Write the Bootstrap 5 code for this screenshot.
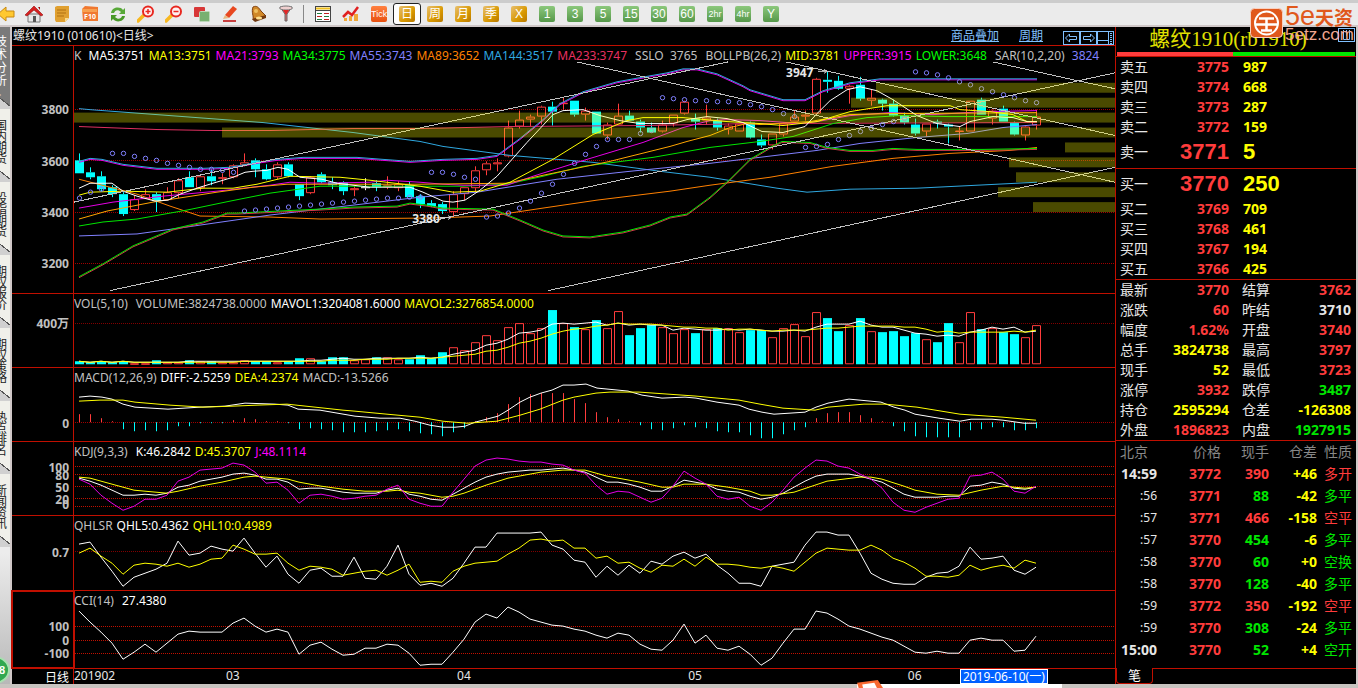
<!DOCTYPE html>
<html lang="zh-CN">
<head>
<meta charset="utf-8">
<meta name="viewport" content="width=device-width, initial-scale=1">
<title>螺纹1910 日线</title>
<link rel="stylesheet" href="https://cdn.jsdelivr.net/npm/bootstrap@5.3.0/dist/css/bootstrap.min.css">
<style>
:root{--line:#c00f00;--up:#ff3c3c;--dn:#00e600;--yel:#ffff00;--pale:#e6e6e6;--sky:#80c0ff}
body{font-family:"Noto Sans","Noto Sans CJK SC",sans-serif;font-size:12px;line-height:15px;background:#000;color:var(--pale);overflow:hidden}
.toolbar{border-top:3px solid #ccc;border-bottom:2px solid #d0c8c8;background:#ebebeb;height:27px;flex:none}
.tool{width:28px;height:22px;padding:0;border:1px solid transparent;background:none;flex:none;display:flex;align-items:center;justify-content:center;border-radius:3px}
.tool svg{width:18px;height:18px;flex:none}
.tool:first-child{margin-left:-8px}
.tool[aria-pressed=true]{background:#fff;border-color:#222}
.sep{width:9px;flex:none}
.sep::before{content:"";display:block;width:1px;height:18px;margin:2px 0 0 3px;background:#888}
.chip{width:16px;height:16px;border-radius:2px;font:12px/16px "Liberation Sans","Noto Sans CJK SC",sans-serif;color:#fff;text-align:center;white-space:nowrap}
.gold{background:linear-gradient(135deg,#e8c070,#d89800 60%,#b87800)}
.leaf{background:linear-gradient(#8cc87c,#56984a)}
.chip.tight{font-size:9px}
.tick{background:linear-gradient(#ff8040,#e85010)}
.side{width:12px;flex:none;background:linear-gradient(#ececec 80%,#b8b8b8);border-right:2px solid #d0c8c8;overflow:hidden;position:relative}
.side button{display:flex;align-items:flex-start;width:10px;height:73px;flex:none;padding:11px 0 0;border:0;background:linear-gradient(39deg,#d0d0d0 8px,#555 8px,#555 9px,#f0f0ea 9px);color:#222;overflow:hidden;text-align:left}
.side button span{display:block;flex:none;width:13px;margin-left:-5px;font-size:12px;line-height:11px;word-break:break-all}
.side .on{background:linear-gradient(39deg,#d0d0d0 8px,#555 8px,#555 9px,#7a7a7a 9px);color:#fff;height:82px;padding-top:8px}
.side .on span{line-height:13px}
.side .orb{position:absolute;left:-22px;bottom:0;width:32px;height:28px;border-radius:50%;background:#30a850;border:2px solid #a8e0b0;color:#fff;font:bold 11px/24px "Liberation Sans",sans-serif;text-align:right;padding-right:3px}
.titlebar{height:19px;flex:none;border-bottom:1px solid var(--line);padding:0 1px}
.titlebar h1{font-size:12px;line-height:18px;margin:0;font-weight:400}
.titlebar a{color:var(--sky);line-height:18px}
.win{padding:0;border:1px solid var(--sky);background:#000;width:17px;height:14px;display:block}
.win svg{display:block;width:15px;height:12px}
.pane{display:flex;flex-basis:0;min-height:0;border-bottom:1px solid var(--line)}
.axis{width:62px;flex:none;border-right:1px solid var(--line);position:relative;font-weight:700;color:#c0c0c0}
.axis span{position:absolute;right:4px;transform:translateY(-50%)}
.plot{position:relative;flex:1;min-width:0}
.plot svg{position:absolute;inset:0;width:100%;height:100%}
.plot svg *{vector-effect:non-scaling-stroke}
.leg{position:relative;z-index:1;display:flex;column-gap:4px;white-space:nowrap;padding:2px 0 0;color:#c0c0c0;overflow:hidden}
.pk{position:absolute;font:bold 12px/12px "Noto Sans",sans-serif}
.hi{left:68.4%;top:8.4%}.lo{left:32.5%;top:67.6%}
.current .axis{outline:2px solid var(--line);outline-offset:-1px}
.cw{color:#fff}.cy{color:var(--yel)}.cm{color:#f0f}.cg{color:#00ff00}.cp{color:#8080ff}.co{color:#ff8000}.cb{color:#2fa8e0}.cr{color:#e83060}
.r{color:var(--up)}.g{color:var(--dn)}.y{color:var(--yel)}
.dates{height:15px;flex:none}
.dates .track{position:relative;flex:1}
.dates .track span{position:absolute;top:0;line-height:14px}
.dates .track .cur{background:#0060ff;border:1px solid #fff;color:#fff;height:15px;padding:0 2px;white-space:nowrap}
.quote{width:243px;flex:none;border-left:1px solid var(--line);border-right:2px solid #d0c8c8}
.name{height:24px;font:21px/25px "Liberation Serif","Noto Sans CJK SC",serif;color:#e0e000;text-align:center;margin:0;padding-right:16px;white-space:nowrap}
.balance{height:4px;margin:1px 1px 0}
.balance i:first-child{flex:116;background:var(--up)}
.balance i:last-child{flex:122;background:var(--dn)}
.quote table{width:100%;table-layout:fixed;border-collapse:collapse;border-top:1px solid var(--line)}
.quote td,.quote th{padding:0;height:20px;line-height:18px;font-size:14px;font-weight:700;text-align:right;white-space:nowrap}
.quote tbody th,.quote thead th{font-weight:400;text-align:left;padding-left:4px}
.depth td:last-child{text-align:left;padding-left:14px}
.big td{font:bold 22px/28px "Liberation Sans",sans-serif!important;height:31px}
.stats th+td+th{padding-left:13px!important}
.stats td:last-child{padding-right:5px}
.deals td,.deals th{height:22px!important;line-height:20px!important}
.deals thead th{color:#888;text-align:right!important;padding-left:0!important;height:23px!important}
.deals th:first-child{text-align:left!important;padding-left:4px!important}
.deals td:first-child{padding-left:5px;text-align:left}
.deals .sec{font-size:12px;font-weight:400;padding:0 8px 0 0!important;text-align:right!important}
.deals td:last-child,.deals th:last-child{font-weight:400;padding-right:4px}
.foot{border-top:1px solid var(--line);height:16px;margin-top:7px}
.foot button{background:#000;color:#fff;border:1px solid var(--line);border-top:0;border-radius:0 0 4px 4px;width:37px;height:16px;margin-top:-1px;padding:0;font-size:13px;line-height:15px;display:block}
.base{height:4px;background:#c8c4c0;flex:none;position:relative}
.base .pop{position:absolute;left:63.1%;width:205px;height:4px;background:#fff;bottom:0}
.base svg{position:absolute;left:0;bottom:0;width:26px;height:8px}
.brand-mark{position:absolute;right:2px;top:7px;width:106px;z-index:3;color:#e0581c;font:bold 19px/19px "Liberation Sans","Noto Sans CJK SC",sans-serif;gap:2px;white-space:nowrap}
.brand-mark svg{width:33px;height:31px;flex:none}
.brand-mark small{display:block;font:17px/13px "Liberation Sans",sans-serif;color:#f0a890}
.brand-mark b{font-size:27px;font-weight:400}
.panelbtn{position:absolute;right:3px;top:28px;z-index:2}
</style>
</head>
<body class="d-flex flex-column vh-100">
<header class="toolbar d-flex" id="tools"></header>

<div class="d-flex flex-grow-1" style="min-height:0">
  <nav class="side d-flex flex-column" aria-label="分类">
    <button class="on"><span>技术分析▸</span></button>
    <button><span>国内期货</span></button><button><span>股指期货</span></button><button><span>期权报价</span></button><button><span>期权策略</span></button><button><span>热点排名</span></button><button><span>新闻资讯</span></button>
    <div class="orb">8</div>
  </nav>

  <main class="d-flex flex-column flex-grow-1" style="min-width:0">
    <div class="titlebar d-flex align-items-start">
      <h1 class="me-auto">螺纹1910 (010610)&lt;日线&gt;</h1>
      <a href="#" class="me-3 ms-1">商品叠加</a><a href="#" class="me-3 ms-1">周期</a>
      <div class="d-flex ms-1">
        <button class="win mt-1" aria-label="左移"><svg viewBox="0 0 15 12" fill="none" stroke="#80c0ff"><path d="M1.5 6l4-4v2.500h7v3h-7V10z"/></svg></button>
        <button class="win mt-1" aria-label="右移"><svg viewBox="0 0 15 12" fill="none" stroke="#80c0ff"><path d="M13.500 6l-4-4v2.500h-7v3h7V10z"/></svg></button>
        <button class="win mt-1" aria-label="布局"><svg viewBox="0 0 15 12" fill="none" stroke="#80c0ff"><path d="M0 8.500h10M10.500 0v12"/><path d="M13 1v11" stroke-width="2" stroke-dasharray="1 1"/></svg></button>
      </div>
    </div>
    <div id="panes" class="d-flex flex-column flex-grow-1" style="min-height:0"></div>
    <div class="dates d-flex">
      <div class="axis fw-normal text-white"><span style="top:50%">日线</span></div>
      <div class="track" id="track"></div>
    </div>
  </main>

  <aside class="quote">
    <h2 class="name">螺纹1910(rb1910)</h2>
    <div class="balance d-flex"><i></i><i></i></div>
    <table class="depth"><colgroup><col style="width:49px"><col style="width:64px"><col></colgroup><tbody id="asks"></tbody></table>
    <table class="depth"><colgroup><col style="width:49px"><col style="width:64px"><col></colgroup><tbody id="bids"></tbody></table>
    <table class="stats"><colgroup><col style="width:42px"><col style="width:71px"><col style="width:46px"><col></colgroup><tbody id="stats"></tbody></table>
    <table class="deals"><colgroup><col style="width:49px"><col style="width:56px"><col style="width:48px"><col style="width:48px"><col></colgroup>
      <thead><tr><th>北京</th><th>价格</th><th>现手</th><th>仓差</th><th>性质</th></tr></thead><tbody id="deals"></tbody></table>
    <div class="foot"><button>笔</button></div>
  </aside>
</div>
<footer class="base"><div class="pop"><svg viewBox="0 0 30 9"><path d="M0 3L24 0l6 9H2z" fill="#f86830"/><path d="M6 5l14-2 3 6H7z" fill="#fff"/></svg></div></footer>

<div class="brand-mark d-flex">
  <svg viewBox="0 0 33 31"><rect x=".5" y="1.500" width="32" height="29" rx="4" fill="#e0581c" stroke="#f8d0c0"/><circle cx="16.500" cy="16" r="11.500" fill="none" stroke="#fff" stroke-width="2"/><path d="M9 11.500h15M16.500 11.500V24M6 17.500h21M11 23.500h11" stroke="#fff" stroke-width="2.500" fill="none"/></svg>
  <div><b>5e</b>天资<small>5etz.com</small></div>
</div>
<button class="win panelbtn" aria-label="面板"><svg viewBox="0 0 15 12" fill="none" stroke="#80c0ff"><path d="M4.500 1v9.500h6V1M7.500 1v6"/></svg></button>

<script>
// ---- toolbar ----
const icons = {
  '后退':'<path d="M1 9l8-7v4h8v6H9v4z" fill="#ffc830" stroke="#c88810"/>',
  '首页':'<path d="M3 9h12v8H3z" fill="#e8e8e8" stroke="#777"/><path d="M8 11h3v6H8z" fill="#555"/><path d="M0 10L9 1l9 9-2 1-7-6-7 6z" fill="#d82020" stroke="#901010" stroke-width=".6"/><path d="M13 2h2v3z" fill="#a01010"/>',
  '笔记':'<path d="M2 2l2-1h12v12l-4 4H3l-1-2z" fill="#e0a030"/><path d="M4 5h9M4 8h9M4 11h7" stroke="#b07010"/><path d="M12 17v-4h4z" fill="#f8dc90"/>',
  'F10':'<path d="M1 4l3-3 13 1v14H2z" fill="#f07830"/><path d="M1 4h15v3H1z" fill="#f8a050"/><text x="9" y="14" font-size="7" font-weight="bold" text-anchor="middle" fill="#fff">F10</text>',
  '刷新':'<path d="M2 8c1-6 9-7 12-3l2-2v6h-6l2-2C9 4 6 5 5 8z" fill="#58a838"/><path d="M16 11c-1 6-9 7-12 3l-2 2v-6h6l-2 2c3 3 6 2 7-1z" fill="#489828"/>',
  '放大':'<path d="M7 10l-6 6" stroke="#f8b820" stroke-width="3.500" stroke-linecap="round"/><circle cx="11" cy="6.500" r="5" fill="#fff0f0" stroke="#e82820" stroke-width="2"/><path d="M8.500 6.500h5M11 4v5" stroke="#e82820" stroke-width="1.500"/>',
  '缩小':'<path d="M7 10l-6 6" stroke="#f8b820" stroke-width="3.500" stroke-linecap="round"/><circle cx="11" cy="6.500" r="5" fill="#fff0f0" stroke="#e82820" stroke-width="2"/><path d="M8.500 6.500h5" stroke="#e82820" stroke-width="1.500"/>',
  '叠加':'<rect x="1" y="2" width="11" height="10" rx="1" fill="#d83838"/><rect x="6.500" y="6.500" width="10" height="10" rx="1" fill="#78b070" stroke="#bcd8b8"/>',
  '画线':'<path d="M4 10L12 1l4 3-8 9z" fill="#e84820"/><path d="M4 10l4 3-6 1z" fill="#e8b880"/><path d="M2 16h13" stroke="#c84040" stroke-width="2"/>',
  '预警':'<path d="M4 2c4-2 6 1 8 4l5 5-13 4C5 11 2 7 4 2z" fill="#d08828" stroke="#804010"/><path d="M3 14l14-4v3L6 17z" fill="#703810"/><ellipse cx="10" cy="13" rx="3" ry="1.500" fill="#ffe090"/><circle cx="7" cy="6" r="2" fill="#f0c060"/>',
  '筛选':'<path d="M3 2h12l-5 7v7H8V9z" fill="#d87070" stroke="#666"/><ellipse cx="9" cy="3" rx="6.500" ry="2" fill="#f0d0d0" stroke="#777"/><path d="M6 5h6l-3 5z" fill="#e02828"/>',
  '|':'',
  '报价':'<rect x="1.500" y="1.500" width="15" height="15" fill="#fff" stroke="#444"/><path d="M2 3.500h14" stroke="#f0c020" stroke-width="2"/><path d="M2 5.500h14" stroke="#444"/><path d="M3 8.500h5M3 14.500h5M10 11.500h5" stroke="#208040"/><path d="M10 8.500h5M3 11.500h5M10 14.500h5" stroke="#c02020"/>',
  '走势':'<path d="M2 16v-3h3v3zM7 16v-5h3v5zM12 16V9h4v7z" fill="#f0a838"/><path d="M1 12l5-5 4 3 6-8" stroke="#e02020" stroke-width="2.500" fill="none"/>'
};
const periods = ['日','周','月','季','X','1','3','5','15','30','60','2hr','4hr','Y'];
tools.innerHTML = Object.entries(icons).map(([k,v]) => k==='|' ? '<div class="sep"></div>' : `<button class="tool" aria-label="${k}"><svg viewBox="0 0 18 18">${v}</svg></button>`).join('')
  + '<button class="tool"><span class="chip tick tight">Tick</span></button>'
  + periods.map((p,i) => `<button class="tool" aria-pressed="${i===0}"><span class="chip ${i<5?'gold':'leaf'} ${p.length>2?'tight':''}">${p}</span></button>`).join('');

// ---- chart data: one bar every 11 units, first bar centred at 79 ----
const X = i => 79 + 11*i;
// kind, open/close top, bottom, high, low
const bars = `d161,174,154,174 d173,178,168,180 d177,190,172,192 d188,195,186,198 d195,215,193,217 u200,211,196,212 u195,200,190,200 d195,202,193,213 u193,201,188,201 u181,194,179,199 d178,188,172,188 u177,189,177,192 d177,182,170,186 u178,179,174,185 u166,178,165,179 u163,166,154,167 d161,170,159,178 d170,180,165,181 u165,178,163,180 d165,177,163,178 d185,197,185,201 u178,194,177,195 d175,183,173,184 d183,186,178,190 d183,192,182,196 u189,191,187,197 w188,189,179,191 d184,188,181,192 u186,188,177,190 u185,189,182,192 d186,198,182,198 d197,205,195,209 d204,207,201,208 d205,212,203,215 u195,213,192,217 u188,195,188,201 u171,189,167,193 u164,171,162,176 u163,165,159,172 u128,157,121,158 u120,127,111,129 u117,120,115,127 u107,117,106,125 d107,112,102,126 u103,104,98,110 d101,115,101,117 u111,115,108,121 d112,134,112,134 u125,136,123,140 u116,125,104,125 d116,121,111,121 d122,128,120,133 d128,133,123,133 u125,132,121,133 u115,124,115,127 u102,114,101,115 d119,122,114,130 u118,121,105,125 d121,128,119,131 u126,130,124,135 u124,132,124,132 d123,138,122,139 d140,146,135,148 u134,146,134,150 u124,135,123,137 u117,122,111,122 u115,117,111,121 u79,114,78,116 d80,82,72,93 d81,89,76,90 u86,89,85,104 d85,99,77,101 u98,101,90,106 d100,104,99,111 d104,116,100,117 d116,123,113,125 d125,134,119,136 u124,132,124,137 d122,124,120,129 d125,127,124,144 u131,132,127,141 u101,132,101,132 d100,115,98,115 u111,119,110,125 d109,122,106,122 d123,135,122,136 u127,136,126,141 u117,126,110,130`.split(' ').map(s=>[s[0],...s.slice(1).split(',').map(Number)]);
const sar = [199,193,190,154,154,157,159,161,164,166,168,170,170,171,173,212,211,210,209,208,207,206,205,204,203,202,201,200,199,199,198,198,173,173,175,178,180,218,217,214,209,202,194,185,175,164,155,147,140,140,140,134,131,98,99,100,101,101,102,102,103,105,107,110,114,117,148,147,145,140,136,132,129,125,122,119,72,73,75,78,82,85,89,92,95,98,101,103];
const curves = [
 ['#2fa8e0','79,109 90,110 170,116 263,123 353,133 420,142 443,147 510,156 593,163 660,172 710,178 777,189 807,193 850,190 917,189 1037,183'],
 ['#e03060','79,127 157,130 213,131 270,131 353,129 420,129 510,127 643,126 750,124 1037,123'],
 ['#ff8000','79,180 137,195 170,207 200,217 270,218 320,220 430,219 490,217 543,209 597,201 670,192 710,186 770,178 833,167 893,159 950,154 1010,151 1037,148'],
 ['#8080ff','79,237 137,235 187,228 270,216 337,208 420,198 477,193 557,180 630,172 710,164 817,151 860,144 917,138 967,134 1003,128 1037,125'],
 ['#00e600','79,227 103,223 137,220 187,211 230,202 270,194 320,187 410,187 463,187 507,185 543,177 583,167 653,158 710,148 760,142 793,137 833,124 867,118 900,116 950,117 1037,117'],
 ['#e600e6','79,209 113,203 163,197 217,192 270,186 290,183 320,184 370,183 387,181 420,183 443,185 463,186 507,186 533,177 587,160 643,143 683,128 710,121 727,120 760,121 800,124 817,122 850,116 890,113 933,115 983,112 1037,111'],
 ['#ffa500','79,220 107,212 153,203 217,193 253,188 287,185 420,185 507,184 543,176 610,162 670,147 687,142 710,136 730,128 747,124 760,125 810,122 850,115 890,114 1037,113'],
 ['#ffff00','79,196 90,193 123,192 167,193 203,189 233,189 257,185 290,177 340,178 370,181 420,187 453,193 480,192 510,183 553,160 593,135 627,121 643,118 683,118 727,122 760,124 783,126 817,122 850,112 887,106 950,106 960,110 990,112 1013,115 1027,122 1037,122'],
 ['#ffffff','79,189 90,184 112,184 123,192 137,197 155,202 168,201 180,195 200,188 213,184 233,178 245,173 253,172 267,171 278,168 288,170 300,178 322,180 337,184 353,186 370,188 410,188 423,193 443,202 453,203 465,201 480,191 497,177 527,143 553,115 563,111 583,110 600,116 620,121 640,124 673,124 687,120 707,117 727,119 743,123 762,132 783,133 805,127 817,114 830,101 847,90 860,87 877,91 893,100 917,116 937,124 960,127 970,122 993,117 1013,118 1027,122 1037,122']
];
const upper = '79,163 90,160 102,161 123,166 157,170 203,170 230,169 257,164 277,161 303,159 357,159 383,161 410,163 443,161 477,160 497,157 520,140 543,121 560,105 583,93 617,83 650,77 667,74 683,70 697,70 717,75 743,87 750,91 783,101 805,101 823,92 850,84 880,80 1037,80';
const lower = '79,278 103,265 133,247 173,230 203,223 227,214 237,214 320,210 353,208 397,207 410,204 427,206 443,209 493,210 520,221 543,231 563,237 590,238 623,233 650,226 670,218 687,215 710,198 730,180 750,160 770,148 782,142 810,143 827,148 850,151 873,151 893,149 917,150 983,150 1037,149';
const rays = ['74,203 728,62','110,292 1115,73','548,292 1115,168','577,62 1115,183','786,62 1115,136','993,62 1078,81 1115,89','1078,81 1115,73'];
const profile = [[876,83],[851,98],[74,113],[222,128],[1065,143],[1009,158],[1016,173],[998,188],[1033,203]];
const vol = [362,363,362,363,362,364,364,361,363,363,361,362,362,363,363,361,362,362,363,362,359,359,362,358,358,361,360,358,358,360,360,356,359,353,348,351,343,336,341,328,324,334,329,311,324,328,330,321,329,312,336,329,326,328,334,330,334,330,329,329,333,331,331,338,329,325,337,313,319,332,326,319,332,333,332,337,334,340,343,324,343,313,330,329,333,335,338,326];
const macd = [415,415,419,422,430,432,431,432,431,427,427,424,424,424,421,419,420,422,422,424,430,429,430,431,433,433,433,432,431,430,432,434,435,437,433,429,422,418,414,405,398,395,394,394,394,400,404,413,418,420,422,426,430,431,429,426,428,429,432,433,433,436,439,439,435,431,428,419,414,413,413,416,419,422,427,432,437,438,438,438,438,431,430,428,428,431,431,429];
const diff = '79,398 90,397 102,398 112,400 123,405 135,408 168,410 200,408 225,407 245,404 275,405 288,406 298,410 320,411 355,417 380,419 400,419 415,422 430,426 443,428 455,428 465,427 475,423 498,417 508,411 520,403 530,398 541,394 552,391 563,386 574,386 586,385 597,389 628,392 642,396 662,399 685,398 696,399 717,403 739,406 749,410 762,413 774,415 805,413 816,408 828,404 849,400 881,403 894,408 905,411 915,415 939,419 960,422 971,420 992,420 1003,421 1024,424 1036,424';
const dea = '79,402 100,401 123,401 135,403 170,406 203,408 233,407 257,406 287,405 343,411 355,412 387,415 420,418 443,422 467,424 497,422 520,416 540,410 563,401 574,398 596,394 610,393 639,393 696,397 739,401 760,405 783,409 815,411 828,408 864,405 885,405 917,408 960,415 1003,418 1036,421';
const kJ = [480,485,496,504,511,507,500,500,496,482,478,471,470,469,464,466,473,484,483,491,504,496,495,497,500,499,497,496,490,486,500,504,507,507,493,480,467,461,459,460,462,463,463,465,466,471,474,486,495,492,493,498,503,499,487,472,479,485,497,500,498,507,511,503,491,478,469,461,462,467,469,475,480,489,503,511,513,508,504,500,499,477,476,473,480,492,494,487];
const kK = [479,482,486,491,496,496,495,496,494,488,486,482,480,478,475,474,476,480,480,483,490,489,489,491,493,494,494,494,491,489,495,497,500,501,495,489,483,478,475,473,472,471,471,470,469,471,473,478,483,483,485,488,492,492,487,481,483,485,490,492,493,497,500,498,494,488,482,477,475,475,475,477,480,483,489,495,498,498,498,497,497,487,486,483,485,489,490,488];
const kDi = [0,1,3,5,8,9,11,13,15,16,17,19,20,22,24,26,28,29,30,31,33,34,35,37,39,42,44,46,48,51,53,54,55,57,59,61,62,63,65,68,71,72,73,75,76,78,80,82,84,86,87];
const kD = [478,479,485,491,494,492,487,483,478,477,478,480,483,487,490,492,492,491,493,494,498,497,494,486,479,473,471,471,477,483,488,488,485,485,488,492,496,496,493,482,478,478,480,487,491,495,496,491,487,489,488];
const q5 = [545,543,558,572,587,578,574,570,564,542,556,554,547,550,552,539,554,568,557,575,584,571,569,577,577,558,579,580,567,546,575,586,584,587,579,564,548,548,534,534,534,534,533,546,550,561,563,578,567,576,566,574,562,565,557,553,559,555,566,574,584,584,587,567,565,563,546,533,533,536,536,554,574,580,584,585,585,578,574,573,567,548,560,559,557,571,575,568];
const q10 = [554,549,557,564,575,566,564,565,567,564,568,565,560,559,546,550,555,555,554,564,571,567,568,570,576,574,572,571,576,571,565,583,582,583,572,567,564,563,562,555,549,541,540,542,541,549,549,559,557,564,563,569,573,566,567,560,567,558,565,565,566,568,569,567,569,572,563,554,549,550,551,551,546,551,559,563,569,577,577,578,576,566,571,568,566,569,561,564];
const cci = [611,622,632,643,659,652,644,652,643,634,631,632,632,632,623,618,626,632,629,632,654,645,642,649,655,654,648,648,644,645,653,665,664,664,652,639,622,614,618,607,612,619,622,625,626,629,631,635,638,633,635,644,649,650,640,624,643,635,648,650,646,654,665,658,643,629,629,611,613,619,626,629,633,637,640,646,652,653,651,653,653,640,638,640,640,651,650,636];

const line = (p,c,extra='') => `<polyline points="${p}" fill="none" stroke="${c}" ${extra}/>`;
const series = (a,c) => line(a.map((v,i)=>X(i)+','+v).join(' '), c);
const grid = (ys,c='#a00000') => ys.map(y=>`<path d="M75 ${y+.5}H1115" stroke="${c}" stroke-dasharray="1 1" shape-rendering="crispEdges"/>`).join('');
const box = (i,k,t,b) => k==='u'
  ? `<rect x="${X(i)-3.5}" y="${t+.5}" width="8" height="${Math.max(b-t-1,0.5)}" fill="none" stroke="#ff3c3c"/>`
  : `<rect x="${X(i)-4}" y="${t}" width="9" height="${Math.max(b-t,1)}" fill="${k==='w'?'#fff':'#00ffff'}"/>`;
const candle = ([k,t,b,h,l],i) => `<path d="M${X(i)+.5} ${h}V${t}M${X(i)+.5} ${b}V${l}" stroke="${k==='u'?'#ff3c3c':k==='w'?'#fff':'#00ffff'}"/>` + box(i,k,t,b);
const mean = n => vol.map((_,i)=>{const s=vol.slice(Math.max(0,i-n+1),i+1);return Math.round(s.reduce((a,b)=>a+b)/s.length)});

const panes = [
 {top:46,h:249,ticks:[[109,3800],[161,3600],[213,3400],[264,3200]],
  leg:[['','K&nbsp;'],['cw','MA5:3751'],['cy','MA13:3751'],['cm','MA21:3793'],['cg','MA34:3775'],['cp','MA55:3743'],['co','MA89:3652'],['cb','MA144:3517'],['cr','MA233:3747'],['ps-1','SSLO&nbsp; 3765'],['ps-1','BOLLPB(26,2)'],['cy','MID:3781'],['cm','UPPER:3915'],['cg','LOWER:3648'],['ps-1','SAR(10,2,20)&nbsp;'],['cp','3824']],
  svg: grid([109,161,213,264]) + bars.map(candle).join('')
   + curves.map(([c,p])=>line(p,c)).join('')
   + line(upper,'#e600e6') + line(upper,'#2fa8e0','transform="translate(0,-1)"')
   + line(lower,'#d03848','transform="translate(0,1)"') + line(lower,'#00e600')
   + rays.map(p=>line(p,'#c0c0c0','shape-rendering="crispEdges"')).join('')
   + sar.map((y,i)=>`<circle cx="${X(i)+.5}" cy="${y}" r="2.200" fill="none" stroke="#8080ff"/>`).join('')
   + profile.map(([x,y])=>`<rect x="${x}" y="${y}" width="${1115-x}" height="10" fill="#ff0" fill-opacity=".29"/>`).join('')
   + '<path d="M818 71.500h8m-2-2l3 2-3 2M440 218.500h10m-2-2l3 2-3 2" stroke="#ccc" fill="none"/>',
  html:'<span class="pk hi">3947</span><span class="pk lo">3380</span>'},
 {top:295,h:74,ticks:[[324,'400万']],
  leg:[['me-1','VOL(5,10)'],['','VOLUME:3824738.0000'],['cw','MAVOL1:3204081.6000'],['cy','MAVOL2:3276854.0000']],
  svg: grid([324],'#800000') + vol.map((t,i)=>box(i,bars[i][0]==='w'?'u':bars[i][0],t,365)).join('') + series(mean(5),'#fff') + series(mean(10),'#ff0')},
 {top:369,h:74,ticks:[[423,'0']],
  leg:[['','MACD(12,26,9)'],['cw','DIFF:-2.5259'],['cy','DEA:4.2374'],['','MACD:-13.5266']],
  svg: grid([423]) + macd.map((y,i)=>`<path d="M${X(i)+.5} 423V${y}" stroke="${y<423?'#ff3c3c':'#00ffff'}"/>`).join('') + line(diff,'#fff') + line(dea,'#ff0')},
 {top:443,h:74,ticks:[[467,100],[475,80],[487,50],[499,20],[504,0]],
  leg:[['me-1','KDJ(9,3,3)'],['cw','K:46.2842'],['cy','D:45.3707'],['cm','J:48.1114']],
  svg: grid([467,475,487,499,507],'#c01000') + series(kK,'#fff') + line(kD.map((v,n)=>X(kDi[n])+','+v).join(' '),'#ff0') + series(kJ,'#e600e6')},
 {top:517,h:74,ticks:[[552,'0.7']],
  leg:[['','QHLSR'],['cw','QHL5:0.4362'],['cy','QHL10:0.4989']],
  svg: grid([552],'#800000') + series(q5,'#fff') + series(q10,'#ff0')},
 {top:591,h:78,cls:'current',ticks:[[626,100],[640,0],[653,-100]],
  leg:[['me-1','CCI(14)'],['cw','27.4380']],
  svg: grid([626,640,653],'#c01000') + series(cci,'#fff')}
];
document.getElementById('panes').innerHTML = panes.map(p => `<section class="pane ${p.cls||''}" style="flex-grow:${p.h}">
 <div class="axis">${p.ticks.map(([y,t])=>`<span style="top:${((y+.5-p.top)/(p.h-1)*100).toFixed(1)}%">${t}</span>`).join('')}</div>
 <div class="plot"><svg viewBox="74 ${p.top} 1041 ${p.h-1}" preserveAspectRatio="none">${p.svg}</svg>
 <div class="leg">${p.leg.map(([c,t])=>`<span class="${c}">${t}</span>`).join('')}</div>${p.html||''}</div></section>`).join('');
track.innerHTML = [[0,'201902'],[152,'03'],[383,'04'],[614,'05'],[834,'06']].map(([x,t])=>`<span style="left:${(x/10.41).toFixed(1)}%">${t}</span>`).join('')
 + `<span class="cur" style="left:${(886/10.41).toFixed(1)}%">2019-06-10(一)</span>`;

// ---- quote tables ----
const depth = (rows,big) => rows.map((r,i)=>`<tr class="${i===big?'big':''}"><th scope="row">${r[0]}</th><td class="r">${r[1]}</td><td class="y">${r[2]}</td></tr>`).join('');
asks.innerHTML = depth([['卖五',3775,987],['卖四',3774,668],['卖三',3773,287],['卖二',3772,159],['卖一',3771,5]],4);
bids.innerHTML = depth([['买一',3770,250],['买二',3769,709],['买三',3768,461],['买四',3767,194],['买五',3766,425]],0);
stats.innerHTML = [['最新','r','3770','结算','r','3762'],['涨跌','r','60','昨结','','3710'],['幅度','r','1.62%','开盘','r','3740'],['总手','y','3824738','最高','r','3797'],['现手','y','52','最低','r','3723'],['涨停','r','3932','跌停','g','3487'],['持仓','y','2595294','仓差','y','-126308'],['外盘','r','1896823','内盘','g','1927915']]
 .map(r=>`<tr><th scope="row">${r[0]}</th><td class="${r[1]}">${r[2]}</td><th scope="row">${r[3]}</th><td class="${r[4]}">${r[5]}</td></tr>`).join('');
deals.innerHTML = [['14:59',3772,'r',390,'+46','r','多开'],[':56',3771,'g',88,'-42','g','多平'],[':57',3771,'r',466,'-158','r','空平'],[':57',3770,'g',454,'-6','g','多平'],[':58',3770,'g',60,'+0','g','空换'],[':58',3770,'g',128,'-40','g','多平'],[':59',3772,'r',350,'-192','r','空平'],[':59',3770,'g',308,'-24','g','多平'],['15:00',3770,'g',52,'+4','g','空开']]
 .map(r=>`<tr><td class="${r[0][0]===':'?'sec':''}">${r[0]}</td><td class="r">${r[1]}</td><td class="${r[2]}">${r[3]}</td><td class="y">${r[4]}</td><td class="${r[5]}">${r[6]}</td></tr>`).join('');
</script>
<script src="https://cdn.jsdelivr.net/npm/bootstrap@5.3.0/dist/js/bootstrap.bundle.min.js"></script>
</body>
</html>
